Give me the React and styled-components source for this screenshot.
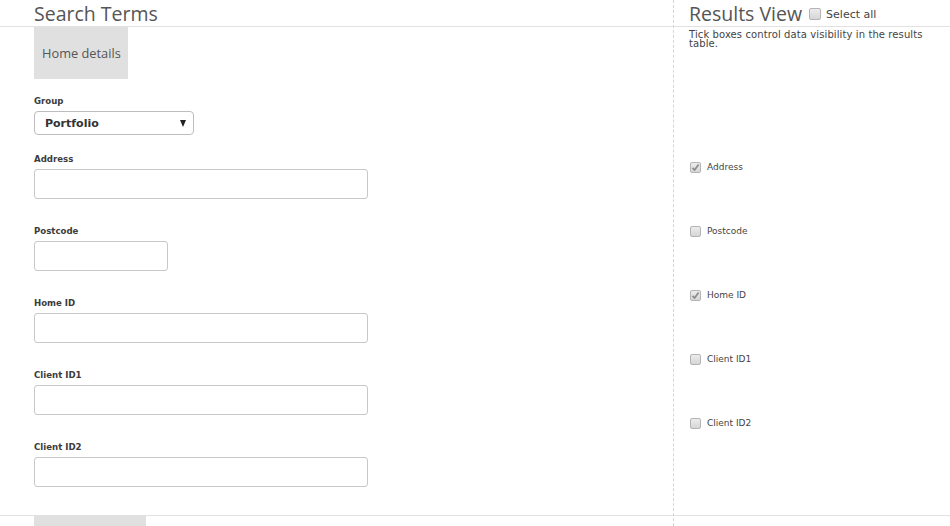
import React from "react";
import styled, { createGlobalStyle } from "styled-components";

const Global = createGlobalStyle`
  html, body { margin: 0; padding: 0; background: #fff; }
  body { font-family: "DejaVu Sans", Verdana, sans-serif; color: #444; overflow: hidden; }
  * { box-sizing: border-box; }
`;

const Page = styled.div`
  display: grid;
  grid-template-columns: 674px 1fr;
  width: 950px;
`;

const Column = styled.section`
  display: flex;
  flex-direction: column;
  border-right: ${(p) => (p.$divider ? "1px dashed #d6d6d6" : "none")};
`;

const Header = styled.header`
  height: 27px;
  border-bottom: 1px solid #e2e2e2;
  padding-left: ${(p) => p.$inset}px;
  display: flex;
  align-items: flex-start;
`;

const Title = styled.h1`
  margin: 0;
  font-family: "Open Sans", sans-serif;
  font-weight: 400;
  font-size: 19.5px;
  line-height: 27px;
  height: 26px;
  color: #555;
`;

const Body = styled.div`
  height: 489px;
  border-bottom: 1px solid #e2e2e2;
  padding-left: ${(p) => p.$inset}px;
`;

const Footer = styled.div`
  height: 40px;
  padding-left: ${(p) => p.$inset}px;
`;

const Tab = styled.div`
  display: inline-flex;
  align-items: center;
  height: 52px;
  padding: 0 7px 0 8px;
  background: #e0e0e0;
  font-family: "Open Sans", sans-serif;
  font-size: 12.8px;
  color: #555;
`;

const FooterButton = styled.div`
  width: 112px;
  height: 30px;
  background: #e0e0e0;
`;

const Form = styled.div`
  display: flex;
  flex-direction: column;
  padding-top: 16px;
`;

const Field = styled.div`
  display: flex;
  flex-direction: column;
  align-items: flex-start;
  margin-bottom: ${(p) => p.$after}px;
`;

const Label = styled.label`
  font-family: "DejaVu Sans", Verdana, sans-serif;
  font-weight: 700;
  font-size: 8.6px;
  line-height: 12px;
  color: #3c3c3c;
  margin-bottom: 4px;
`;

const SelectBox = styled.div`
  position: relative;
  width: 160px;
  height: 24px;
  border: 1px solid #bdbdbd;
  border-radius: 4px;
  display: flex;
  align-items: center;
  padding-left: 10px;
  font-family: "DejaVu Sans", Verdana, sans-serif;
  font-weight: 700;
  font-size: 11px;
  color: #333;
`;

const Arrow = styled.span`
  position: absolute;
  right: 7px;
  top: 8px;
  width: 0;
  height: 0;
  border-left: 3.5px solid transparent;
  border-right: 3.5px solid transparent;
  border-top: 7px solid #222;
`;

const Input = styled.input`
  width: ${(p) => p.$w}px;
  height: 30px;
  border: 1px solid #c8c8c8;
  border-radius: 3px;
  background: #fff;
  outline: none;
  padding: 0 6px;
`;

const HeadRow = styled.div`
  display: flex;
  align-items: center;
  height: 26px;
`;

const SelectAll = styled.label`
  display: flex;
  align-items: center;
  gap: 5px;
  margin-left: 7px;
  margin-top: 2px;
  font-family: "DejaVu Sans", Verdana, sans-serif;
  font-size: 11px;
  color: #444;
`;

const Note = styled.p`
  margin: 0;
  padding-top: 3px;
  width: 245px;
  font-family: "DejaVu Sans", Verdana, sans-serif;
  font-size: 10px;
  letter-spacing: 0.1px;
  line-height: 9px;
  color: #444;
`;

const CheckList = styled.div`
  display: flex;
  flex-direction: column;
  gap: 52px;
  margin-top: 113px;
`;

const CheckRow = styled.label`
  display: flex;
  align-items: center;
  gap: 6px;
  height: 12px;
  padding-left: 1px;
  font-family: "DejaVu Sans", Verdana, sans-serif;
  font-size: 9px;
  color: #444;
`;

const Box = styled.span`
  display: inline-flex;
  align-items: center;
  justify-content: center;
  width: ${(p) => p.$size}px;
  height: ${(p) => p.$size}px;
  border: 1px solid #b4b4b4;
  border-radius: 2px;
  background: linear-gradient(#ececec, #d6d6d6);
  flex-shrink: 0;
`;

const Check = ({ checked, size = 11 }) => (
  <Box $size={size}>
    {checked && (
      <svg width="9" height="9" viewBox="0 0 9 9">
        <path d="M1.5 4.8 L3.6 7 L7.6 1.5" fill="none" stroke="#8a8a8a" strokeWidth="1.7" />
      </svg>
    )}
  </Box>
);

const fields = [
  { label: "Address", w: 334 },
  { label: "Postcode", w: 134 },
  { label: "Home ID", w: 334 },
  { label: "Client ID1", w: 334 },
  { label: "Client ID2", w: 334 },
];

const checks = [
  { label: "Address", on: true },
  { label: "Postcode", on: false },
  { label: "Home ID", on: true },
  { label: "Client ID1", on: false },
  { label: "Client ID2", on: false },
];

export default function App() {
  return (
    <>
      <Global />
      <Page>
        <Column $divider>
          <Header $inset={34}>
            <Title>Search Terms</Title>
          </Header>
          <Body $inset={34}>
            <Tab>Home details</Tab>
            <Form>
              <Field $after={18}>
                <Label>Group</Label>
                <SelectBox>
                  Portfolio
                  <Arrow />
                </SelectBox>
              </Field>
              {fields.map((f) => (
                <Field key={f.label} $after={26}>
                  <Label>{f.label}</Label>
                  <Input $w={f.w} />
                </Field>
              ))}
            </Form>
          </Body>
          <Footer $inset={34}>
            <FooterButton />
          </Footer>
        </Column>
        <Column>
          <Header $inset={15}>
            <HeadRow>
              <Title>Results View</Title>
              <SelectAll>
                <Check size={12} />
                Select all
              </SelectAll>
            </HeadRow>
          </Header>
          <Body $inset={15}>
            <Note>Tick boxes control data visibility in the results table.</Note>
            <CheckList>
              {checks.map((c) => (
                <CheckRow key={c.label}>
                  <Check checked={c.on} />
                  {c.label}
                </CheckRow>
              ))}
            </CheckList>
          </Body>
          <Footer $inset={15} />
        </Column>
      </Page>
    </>
  );
}
